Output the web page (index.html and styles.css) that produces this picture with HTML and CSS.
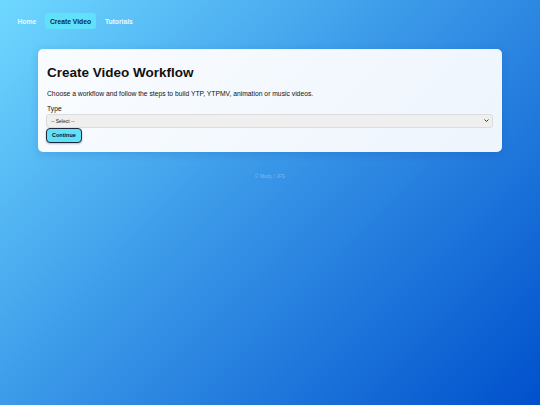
FILE: index.html
```html
<!DOCTYPE html>
<html lang="en">
<head>
<meta charset="utf-8">
<title>Create Video Workflow</title>
<link rel="stylesheet" href="styles.css">
</head>
<body>
<header class="topbar">
  <nav class="nav">
    <a class="nav-link" href="#">Home</a>
    <a class="nav-link active" href="#">Create Video</a>
    <a class="nav-link" href="#">Tutorials</a>
  </nav>
</header>
<main class="main">
  <section class="card">
    <h1 class="title">Create Video Workflow</h1>
    <p class="lead">Choose a workflow and follow the steps to build YTP, YTPMV, animation or music videos.</p>
    <form class="form">
      <label class="label" for="type">Type</label>
      <div class="select-wrap">
        <select id="type" class="select">
          <option>-- Select --</option>
          <option>YTP</option>
          <option>YTPMV</option>
          <option>Animation</option>
          <option>Music video</option>
        </select>
        <svg class="chevron" viewBox="0 0 10 6" width="5" height="3"><path d="M1 1l4 4 4-4" fill="none" stroke="#222" stroke-width="1.8"/></svg>
      </div>
      <button class="btn" type="button">Continue</button>
    </form>
  </section>
</main>
<footer class="footer">© Mody / JFS</footer>
</body>
</html>
```

FILE: styles.css
```css
* { box-sizing: border-box; }
html, body { height: 100%; }
body {
  margin: 0;
  font-family: "Liberation Sans", Arial, sans-serif;
  background: linear-gradient(135deg, #6fd8ff 0%, #3a98e8 45%, #0050cc 100%);
  min-height: 405px;
  color: #111;
}
.topbar {
  padding: 13px 12px 0;
}
.nav {
  display: flex;
  gap: 3px;
}
.nav-link {
  font-size: 6.75px;
  font-weight: bold;
  color: #eaf8ff;
  text-decoration: none;
  padding: 4.6px 5.4px;
  line-height: 7px;
  border-radius: 3px;
}
.nav-link.active {
  background: #5fe1fb;
  color: #102a3a;
}
.main {
  padding: 20px 38px 0;
}
.card {
  background: linear-gradient(135deg, #f9fcff, #eef5fd);
  border-radius: 5px;
  padding: 8px 8px 9px 9px;
  box-shadow: 0 2px 8px rgba(0, 40, 120, 0.15);
}
.title {
  margin: 8px 0 0;
  font-size: 13.5px;
  line-height: 15.5px;
  color: #111;
}
.lead {
  margin: 9px 0 0;
  font-size: 6.75px;
  line-height: 8px;
  color: #111;
}
.form {
  margin-top: 7px;
  display: flex;
  flex-direction: column;
  align-items: flex-start;
}
.label {
  font-size: 6.75px;
  line-height: 8px;
  color: #111;
}
.select-wrap {
  position: relative;
  width: 100%;
  margin-left: -1px;
  margin-top: 1px;
  font-size: 0;
  line-height: 0;
}
.select {
  display: block;
  appearance: none;
  -webkit-appearance: none;
  width: 100%;
  height: 14px;
  margin: 0;
  border: 1px solid #dcdcdc;
  border-radius: 3px;
  background: #efefef;
  font-family: "Liberation Sans", Arial, sans-serif;
  font-size: 5px;
  color: #222;
  padding: 0 4px;
}
.chevron {
  position: absolute;
  right: 4px;
  top: 5.5px;
}
.btn {
  margin-left: -1px;
  height: 15px;
  padding: 0 5px;
  background: #62e0f9;
  border: 1px solid #1b2a3a;
  border-radius: 4px;
  font-family: "Liberation Sans", Arial, sans-serif;
  font-size: 5.5px;
  font-weight: bold;
  color: #111;
  box-shadow: 0 1px 2px rgba(0, 0, 0, 0.25);
}
.footer {
  text-align: center;
  margin-top: 21px;
  font-size: 5px;
  color: rgba(255, 255, 255, 0.35);
}
```
